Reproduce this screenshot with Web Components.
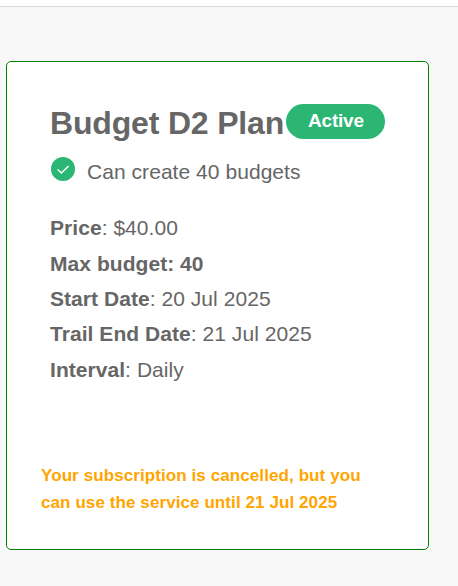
<!DOCTYPE html>
<html lang="en">
<head>
<meta charset="utf-8">
<title>Subscription</title>
<style>
body { margin: 0; background: #f8f8f8; font-family: "Liberation Sans", Arial, sans-serif; color: #666; }
</style>
</head>
<body>
<plan-page>
  <plan-card>
    <plan-heading slot="head">Budget D2 Plan<status-pill slot="status">Active</status-pill></plan-heading>
    <plan-feature>Can create 40 budgets</plan-feature>
    <plan-details>
      <plan-row label="Price">: $40.00</plan-row>
      <plan-row label="Max budget: 40"></plan-row>
      <plan-row label="Start Date">: 20 Jul 2025</plan-row>
      <plan-row label="Trail End Date">: 21 Jul 2025</plan-row>
      <plan-row label="Interval">: Daily</plan-row>
    </plan-details>
    <plan-notice slot="notice">Your subscription is cancelled, but you<br>can use the service until 21 Jul 2025</plan-notice>
  </plan-card>
</plan-page>
<script>
const define = (name, html) => {
  customElements.define(name, class extends HTMLElement {
    constructor() {
      super();
      this.attachShadow({ mode: "open" }).innerHTML = html;
    }
  });
};

define("plan-page", `<style>
  :host { display: block; box-sizing: border-box; height: 586px; overflow: hidden; }
  header { height: 6px; background: #fff; border-bottom: 1px solid #dadade; }
  main { padding: 54px 29px 0 6px; }
</style><header></header><main><slot></slot></main>`);

define("plan-card", `<style>
  :host { display: flex; flex-direction: column; justify-content: space-between; box-sizing: border-box; height: 489px; background: #fff;
    border: 1px solid #008000; border-radius: 5px; padding: 42px 43px 33px; }
  footer { margin: 0 -9px; }
</style><div><slot name="head"></slot><slot></slot></div><footer><slot name="notice"></slot></footer>`);

define("plan-heading", `<style>
  :host { display: flex; align-items: flex-start; height: 38px; white-space: nowrap; }
  h1 { margin: 0; font-size: 32px; line-height: 38px; width: 236px; letter-spacing: -0.17px; }
</style><h1><slot></slot></h1><slot name="status"></slot>`);

define("status-pill", `<style>
  :host { display: block; box-sizing: border-box; width: 99px; height: 35px; border-radius: 18px; background: #2bb673; color: #fff;
    padding-left: 22px; font-weight: bold; font-size: 19px; line-height: 33px; letter-spacing: -0.2px; }
</style><slot></slot>`);

define("plan-feature", `<style>
  :host { display: flex; gap: 12px; margin: 15px 0 0 1px; height: 30px; font-size: 21px; line-height: 30px; letter-spacing: 0.05px; white-space: nowrap; }
  svg { display: block; }
</style><svg width="24" height="24" viewBox="0 0 24 24"><circle cx="12" cy="12" r="12" fill="#2bb673"/><path d="M6.7 12.5l3.7 3.5 7.2-7" fill="none" stroke="#fff" stroke-width="1.5"/></svg><span><slot></slot></span>`);

define("plan-details", `<style>
  :host { display: grid; margin-top: 23px; grid-template-rows: 36px 35px 35px 36px 35px; }
</style><slot></slot>`);

define("plan-row", `<style>
  :host { display: block; font-size: 21px; line-height: 35px; letter-spacing: 0.05px; white-space: nowrap; }
</style><b></b><slot></slot>`);
document.querySelectorAll("plan-row").forEach(row => {
  row.shadowRoot.querySelector("b").textContent = row.getAttribute("label");
});

define("plan-notice", `<style>
  :host { display: block; color: #ffa500; font-weight: bold; font-size: 17px; line-height: 27px; letter-spacing: 0.09px; white-space: nowrap; }
</style><slot></slot>`);
</script>
</body>
</html>
